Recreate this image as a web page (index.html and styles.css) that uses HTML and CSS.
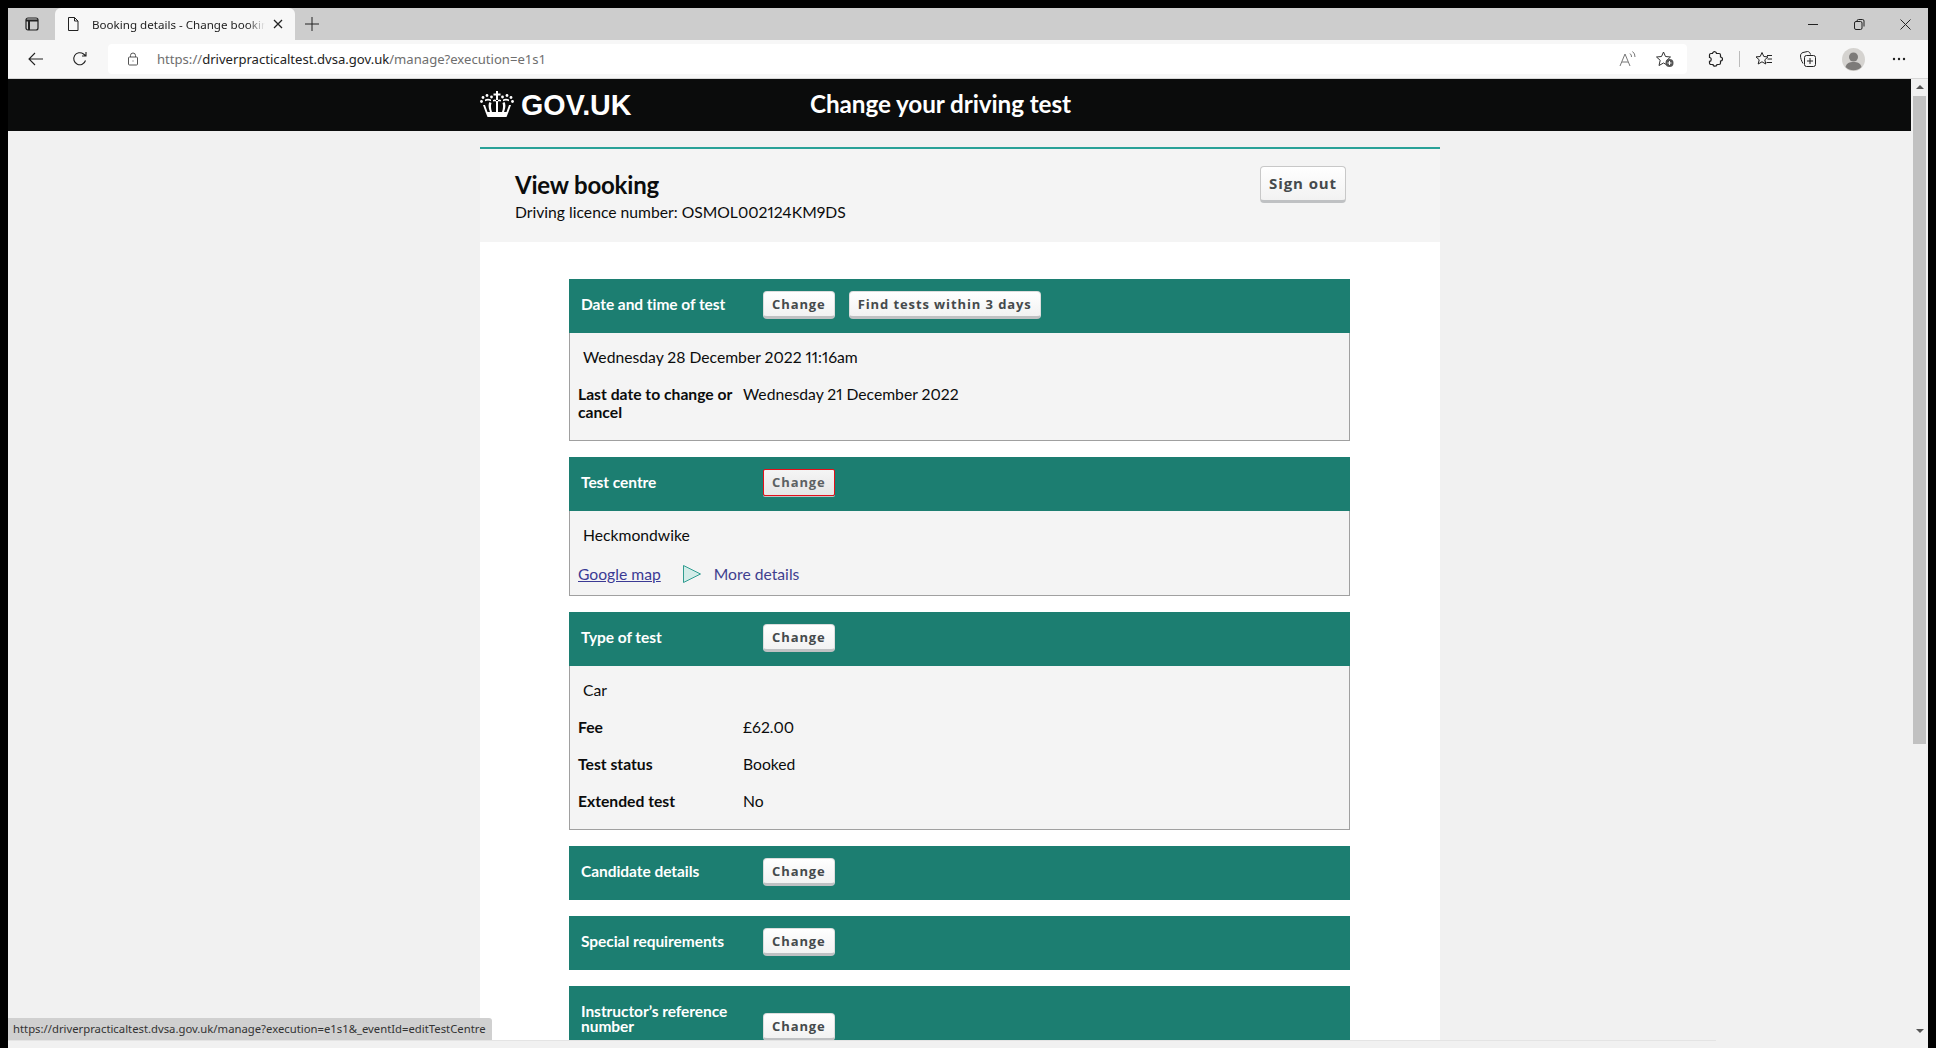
FILE: index.html
```html
<!DOCTYPE html>
<html lang="en">
<head>
    <meta charset="UTF-8">
    <title>Booking details - Change booking</title>
    <link rel="stylesheet" href="styles.css">
</head>
<body>
<div class="browser">
    <div class="tabstrip">
        <div class="tab-side">
            <svg width="16" height="16" viewBox="0 0 16 16" fill="none" stroke="#222" stroke-width="1.2"><rect x="2" y="2" width="12" height="12" rx="2"/><path d="M2 4.500h12M5 4.500V14" stroke-width="2"/></svg>
        </div>
        <div class="tab">
            <svg width="14" height="16" viewBox="0 0 14 16" fill="none" stroke="#222"><path d="M2.500 1.500h6l3.500 3.500v9.500h-9.500zM8.500 1.500V5H12"/></svg>
            <span class="tab-title">Booking details - Change bookin</span>
            <svg class="tab-close" width="10" height="10" viewBox="0 0 10 10" stroke="#222" stroke-width="1.3"><path d="M1 1l8 8M9 1l-8 8"/></svg>
        </div>
        <svg class="new-tab" width="14" height="14" viewBox="0 0 14 14" stroke="#222"><path d="M7 0v14M0 7h14"/></svg>
        <div class="window-btns">
            <svg width="11" height="11" viewBox="0 0 11 11" stroke="#222"><path d="M0 5.500h10"/></svg>
            <svg width="11" height="11" viewBox="0 0 11 11" fill="none" stroke="#222"><rect x="0.500" y="2.500" width="7.500" height="8" rx="1.500"/><path d="M3 2.500V2a1.500 1.500 0 0 1 1.500-1.500h4A1.500 1.500 0 0 1 10 2v5.500"/></svg>
            <svg width="11" height="11" viewBox="0 0 11 11" stroke="#222"><path d="M0.500 0.500l10 10M10.500 0.500l-10 10"/></svg>
        </div>
    </div>
    <div class="toolbar">
        <svg class="nav-back" width="16" height="14" viewBox="0 0 16 14" fill="none" stroke="#222" stroke-width="1.1"><path d="M15 7H1M7 1L1 7l6 6"/></svg>
        <svg class="nav-reload" width="16" height="16" viewBox="0 0 16 16" fill="none" stroke="#222" stroke-width="1.1"><path d="M13.500 9.500A6 6 0 1 1 11.500 3L14 5M14 1v4h-4"/></svg>
        <div class="address">
            <svg width="12" height="14" viewBox="0 0 12 14" fill="none" stroke="#555"><rect x="1.500" y="5" width="9" height="8" rx="1"/><path d="M3.500 5V3.500a2.500 2.500 0 0 1 5 0V5"/><path d="M6 8.500v1"/></svg>
            <span class="url"><span class="url-dim">https://</span>driverpracticaltest.dvsa.gov.uk<span class="url-dim">/manage?execution=e1s1</span></span>
            <span class="address-spacer"></span>
            <svg width="18" height="16" viewBox="0 0 18 16" fill="none" stroke="#777"><path d="M1 15L6 3l5 12M3 11h6M11 2.500a4 4 0 0 1 1.500 3.500M13.500 .5a6.500 6.500 0 0 1 2.500 5.500"/></svg>
            <svg width="20" height="18" viewBox="0 0 20 18"><path d="M8.500 2l2 4.500 5 .5-3.700 3.300L13 15.500 8.500 13 4 15.500l1.200-5.200L1.500 7l5-.5z" fill="none" stroke="#333"/><circle cx="14.500" cy="13" r="4" fill="#555"/><path d="M14.500 11v4M12.500 13h4" stroke="#fff"/></svg>
        </div>
        <div class="toolbar-icons">
            <svg class="ic-ext" width="16" height="16" viewBox="0 0 16 16" fill="none" stroke="#222" stroke-width="1.200"><path d="M5.500 2.500c.3-1.500 1.500-2 2.500-1.700 1 .3 1.500 1 1.500 1.700h2.500c.8 0 1.500.7 1.500 1.500v2c1.500.1 2 1 2 2s-.5 2-2 2v2c0 .8-.7 1.500-1.500 1.500H10c0 1-.8 1.700-2 1.700s-2-.7-2-1.700H4c-.8 0-1.500-.7-1.500-1.500v-1.700c1.200 0 1.700-1 1.700-1.900S3.700 6.500 2.500 6.500V4c0-.8.700-1.500 1.500-1.500z"/></svg>
            <span class="toolbar-sep"></span>
            <svg class="ic-fav" width="18" height="16" viewBox="0 0 18 16" fill="none" stroke="#222"><path d="M7 1.500l1.800 4 4.200.4-3.200 2.900 1 4.200L7 10.800 3.200 13l1-4.200L1 5.900l4.200-.4zM12 4.500h5M12.500 8h4.500M11.500 11.500H17"/></svg>
            <svg class="ic-coll" width="18" height="18" viewBox="0 0 18 18" fill="none" stroke="#222"><path d="M4 13.500C2.500 11 1.500 8 1.500 6c0-2 1-3 2.500-3.500L8.500 1.500c1.500 0 2.500 1 3 3"/><rect x="5.500" y="5.500" width="11" height="11" rx="2"/><path d="M11 8v6M8 11h6"/></svg>
            <svg class="ic-avatar" width="23" height="23" viewBox="0 0 23 23"><circle cx="11.500" cy="11.500" r="11.500" fill="#d5d3d0"/><circle cx="11.500" cy="9" r="4.500" fill="#7d7b79"/><path d="M3.500 19c1-4 4-5 8-5s7 1 8 5a11.500 11.500 0 0 1-16 0z" fill="#7d7b79"/></svg>
            <svg class="ic-more" width="14" height="4" viewBox="0 0 14 4" fill="#222"><circle cx="2" cy="2" r="1.200"/><circle cx="7" cy="2" r="1.200"/><circle cx="12" cy="2" r="1.200"/></svg>
        </div>
    </div>
    <div class="viewport">
        <div class="page">
            <header class="site-header">
                <div class="site-header-inner">
                    <div class="logo">
                        <svg width="34" height="26" viewBox="0 0 34 26" fill="#fff">
                            <path d="M16 0h2v2.500h2.500v2H18V9h-2V4.500h-2.500v-2H16z"/>
                            <circle cx="11.500" cy="6" r="1.400"/><circle cx="22.500" cy="6" r="1.400"/>
                            <circle cx="7" cy="4.500" r="1.400"/><circle cx="27" cy="4.500" r="1.400"/>
                            <circle cx="3" cy="6.500" r="1.400"/><circle cx="31" cy="6.500" r="1.400"/>
                            <circle cx="1.500" cy="10.500" r="1.400"/><circle cx="32.500" cy="10.500" r="1.400"/>
                            <path d="M3 14l2.500 7h2L5 14zM31 14l-2.500 7h-2L29 14zM9.500 11c-1.500 2-1 6 .5 10h2c-1-3-1.500-6-.5-9zM24.500 11c1.500 2 1 6-.5 10h-2c1-3 1.500-6 .5-9zM16 10h2v11h-2z"/>
                            <path d="M5 8.500c2-1 4-1 6 0v1.800c-2-1-4-1-6 0zM29 8.500c-2-1-4-1-6 0v1.800c2-1 4-1 6 0zM13 9c1.300-.7 2.500-.7 3 0v1.500c-.7-.5-2-.5-3 0zM21 9c-1.300-.7-2.500-.7-3 0v1.500c.7-.5 2-.5 3 0z"/>
                            <path d="M5.500 21h23L26.500 26h-19z"/>
                        </svg>
                        <span class="logo-text">GOV.UK</span>
                    </div>
                    <span class="service-name">Change your driving test</span>
                </div>
            </header>
            <main class="container">
                <section class="booking-head">
                    <div class="booking-title">
                        <h1>View booking</h1>
                        <p>Driving licence number: OSMOL002124KM9DS</p>
                    </div>
                    <button class="btn btn-signout">Sign out</button>
                </section>
                <section class="booking-body">
                    <div class="panel">
                        <div class="panel-head">
                            <h2>Date and time of test</h2>
                            <button class="btn">Change</button>
                            <button class="btn">Find tests within 3 days</button>
                        </div>
                        <div class="panel-body">
                            <p class="lead">Wednesday 28 December 2022 11:16am</p>
                            <dl class="row"><dt>Last date to change or cancel</dt><dd>Wednesday 21 December 2022</dd></dl>
                        </div>
                    </div>
                    <div class="panel">
                        <div class="panel-head">
                            <h2>Test centre</h2>
                            <button class="btn btn-focus">Change</button>
                        </div>
                        <div class="panel-body panel-body-short">
                            <p class="lead">Heckmondwike</p>
                            <div class="links">
                                <a href="#" class="map-link">Google map</a>
                                <svg class="more-arrow" width="18" height="18" viewBox="0 0 18 18"><path d="M.5 .5l17 8.500-17 8.500z" fill="#d3ece8" stroke="#2f9c90"/></svg>
                                <span class="more">More details</span>
                            </div>
                        </div>
                    </div>
                    <div class="panel">
                        <div class="panel-head">
                            <h2>Type of test</h2>
                            <button class="btn">Change</button>
                        </div>
                        <div class="panel-body">
                            <p class="lead">Car</p>
                            <dl class="row"><dt>Fee</dt><dd>£62.00</dd></dl>
                            <dl class="row"><dt>Test status</dt><dd>Booked</dd></dl>
                            <dl class="row"><dt>Extended test</dt><dd>No</dd></dl>
                        </div>
                    </div>
                    <div class="panel">
                        <div class="panel-head">
                            <h2>Candidate details</h2>
                            <button class="btn">Change</button>
                        </div>
                    </div>
                    <div class="panel">
                        <div class="panel-head">
                            <h2>Special requirements</h2>
                            <button class="btn">Change</button>
                        </div>
                    </div>
                    <div class="panel">
                        <div class="panel-head panel-head-tall">
                            <h2>Instructor’s reference number</h2>
                            <button class="btn">Change</button>
                        </div>
                    </div>
                </section>
            </main>
        </div>
        <div class="scrollbar">
            <span class="arrow-up"></span>
            <div class="thumb"></div>
            <span class="arrow-down"></span>
        </div>
        <div class="status-tip">https://driverpracticaltest.dvsa.gov.uk/manage?execution=e1s1&amp;_eventId=editTestCentre</div>
    </div>
    <div class="bottom-strip"><div class="bottom-line"></div></div>
</div>
</body>
</html>
```

FILE: styles.css
```css
* {
    box-sizing: border-box;
}
html, body {
    height: 100%;
}
body {
    margin: 0;
    padding: 8px 8px 0 8px;
    background-color: #000;
    font-family: Lato, "Noto Sans", sans-serif;
    color: #0b0c0c;
    overflow: hidden;
}
.browser {
    height: 1040px;
    display: flex;
    flex-direction: column;
}

/* browser chrome */
.tabstrip {
    height: 32px;
    flex: none;
    background-color: #cdcdcd;
    display: flex;
    align-items: center;
}
.tab-side {
    width: 47px;
    display: flex;
    justify-content: center;
}
.tab {
    width: 240px;
    height: 32px;
    background-color: #f7f7f7;
    border-radius: 6px 6px 0 0;
    display: flex;
    align-items: center;
    padding: 0 12px 0 11px;
}
.tab-title {
    width: 173px;
    margin-left: 12px;
    font-family: "Noto Sans", sans-serif;
    font-size: 11.6px;
    white-space: nowrap;
    color: #222;
    -webkit-mask-image: linear-gradient(to right, #000 90%, transparent);
    mask-image: linear-gradient(to right, #000 90%, transparent);
}
.tab-close {
    margin-left: auto;
}
.new-tab {
    margin-left: 10px;
}
.window-btns {
    margin-left: auto;
    display: flex;
    gap: 35px;
    padding-right: 17px;
}
.toolbar {
    height: 39px;
    flex: none;
    background-color: #f7f7f7;
    border-bottom: 1px solid #d6d6d6;
    display: flex;
    align-items: center;
}
.nav-back {
    margin-left: 20px;
}
.nav-reload {
    margin-left: 28px;
}
.address {
    width: 1579px;
    height: 30px;
    margin-left: 20px;
    background-color: #fff;
    border-radius: 4px;
    display: flex;
    align-items: center;
    padding: 0 12px 0 19px;
}
.url {
    margin-left: 18px;
    font-family: "Noto Sans", sans-serif;
    font-size: 13.1px;
    color: #222;
}
.url-dim {
    color: #6e6e6e;
}
.address-spacer {
    flex: 1;
}
.address svg + svg {
    margin-left: 18px;
}
.toolbar-icons {
    flex: 1;
    display: flex;
    align-items: center;
}
.ic-ext {
    margin-left: 20px;
}
.toolbar-sep {
    width: 1px;
    height: 16px;
    background-color: #bbb;
    margin-left: 16px;
}
.ic-fav {
    margin-left: 15px;
}
.ic-coll {
    margin-left: 26px;
}
.ic-avatar {
    margin-left: 25px;
}
.ic-more {
    margin-left: 27px;
}

/* page */
.viewport {
    flex: 1;
    min-height: 0;
    display: flex;
    position: relative;
    background-color: #f1f1f1;
}
.page {
    flex: 1;
    overflow: hidden;
}
.site-header {
    height: 52px;
    background-color: #0b0c0c;
}
.site-header-inner {
    width: 960px;
    margin-left: 472px;
    height: 100%;
    display: flex;
    align-items: center;
    color: #fff;
    font-weight: 700;
}
.logo {
    width: 330px;
    display: flex;
    align-items: center;
    gap: 7px;
}
.logo svg {
    margin-bottom: 2px;
}
.logo-text {
    font-family: "Liberation Sans", sans-serif;
    font-size: 28.7px;
}
.service-name {
    font-size: 24.3px;
    margin-bottom: 3px;
    letter-spacing: -0.1px;
}
.container {
    width: 960px;
    margin: 16px 0 0 472px;
    border-top: 2px solid #28a197;
}
.booking-head {
    height: 93px;
    background-color: #f4f4f4;
    padding: 17px 94px 0 35px;
    display: flex;
    justify-content: space-between;
    align-items: flex-start;
}
.booking-title {
    padding-top: 3px;
}
h1 {
    font-size: 24px;
    margin: 0 0 1px;
    line-height: 32px;
    letter-spacing: -0.2px;
}
.booking-head p {
    margin: 0;
    font-size: 15.7px;
    line-height: 20px;
    font-variant-numeric: proportional-nums;
}
.btn {
    font-family: "Open Sans", sans-serif;
    font-weight: 700;
    font-size: 13px;
    letter-spacing: 0.9px;
    color: #454a4c;
    height: 28px;
    padding: 0 8px 1px;
    background: linear-gradient(#fff, #f2f2f2);
    border: 1px solid #ddd;
    border-bottom: 3px solid #bfc1c3;
    border-radius: 4px;
    white-space: nowrap;
}
.btn-signout {
    height: 37px;
    font-size: 15px;
    padding: 0 8px 2px;
    border-color: #c8c8c8;
    border-bottom-color: #bfc1c3;
}
.booking-body {
    background-color: #fff;
    height: 800px;
    padding: 37px 90px 0 89px;
    display: flex;
    flex-direction: column;
    gap: 16px;
}
.panel {
    flex: none;
}
.panel-head {
    height: 54px;
    background-color: #1c7e71;
    display: flex;
    align-items: center;
    padding-left: 12px;
    gap: 14px;
    color: #fff;
}
.panel-head h2 {
    width: 168px;
    margin: 0 0 3px;
    font-size: 15.5px;
    line-height: 15px;
    font-weight: 700;
    letter-spacing: -0.05px;
}
.panel-head .btn {
    margin-bottom: 2px;
}
.panel-head .btn-focus {
    height: 27px;
    margin-bottom: 3px;
    border: 1px solid #e3101a;
    border-radius: 2px;
    box-shadow: 0 1px 0 #bfc1c3;
    background: linear-gradient(#f5f5f5, #e6e6e6);
    color: #5c6163;
}
.panel-head-tall {
    height: 66px;
}
.panel-head-tall h2 {
    margin: 0;
}
.panel-head-tall .btn {
    align-self: flex-start;
    margin: 27px 0 0;
}
.panel-body {
    background-color: #f4f4f4;
    border: 1px solid #a0a0a0;
    border-top: none;
    padding: 12px 8px 19px;
    font-size: 15.7px;
    font-variant-numeric: proportional-nums;
}
.panel-body-short {
    padding-bottom: 0;
    height: 85px;
}
.lead {
    margin: 0 0 16px 5px;
    line-height: 24px;
}
.row {
    display: flex;
    margin: 0 0 19px;
    line-height: 18px;
}
.row:last-child {
    margin-bottom: 0;
}
.row dt {
    width: 165px;
    font-weight: 700;
    padding-right: 3px;
}
.row dd {
    margin: 0;
}
.links {
    display: flex;
    align-items: center;
    line-height: 20px;
    padding-top: 1px;
}
.map-link {
    color: #3b3a94;
}
.more-arrow {
    margin-left: 22px;
}
.more {
    color: #3f3f8f;
    margin-left: 13px;
}

/* scrollbar and status */
.scrollbar {
    width: 17px;
    flex: none;
    background-color: #f1f1f1;
    display: flex;
    flex-direction: column;
    align-items: center;
}
.arrow-up {
    margin-top: 6px;
    border: 4px solid transparent;
    border-top: none;
    border-bottom: 4px solid #555;
}
.thumb {
    width: 13px;
    height: 648px;
    margin-top: 7px;
    background-color: #c1c1c1;
}
.arrow-down {
    margin-top: auto;
    margin-bottom: 7px;
    border: 4px solid transparent;
    border-bottom: none;
    border-top: 4px solid #555;
}
.status-tip {
    position: absolute;
    left: 0;
    bottom: 0;
    height: 22px;
    width: 484px;
    background-color: #d0d0d0;
    border-radius: 0 3px 0 0;
    font-family: "Noto Sans", sans-serif;
    font-size: 11.3px;
    line-height: 22px;
    padding-left: 5px;
    color: #333;
    white-space: nowrap;
}
.bottom-strip {
    height: 8px;
    flex: none;
    background-color: #f1f1f1;
}
.bottom-line {
    width: 1708px;
    height: 1px;
    background-color: #e4e4e4;
}
```
